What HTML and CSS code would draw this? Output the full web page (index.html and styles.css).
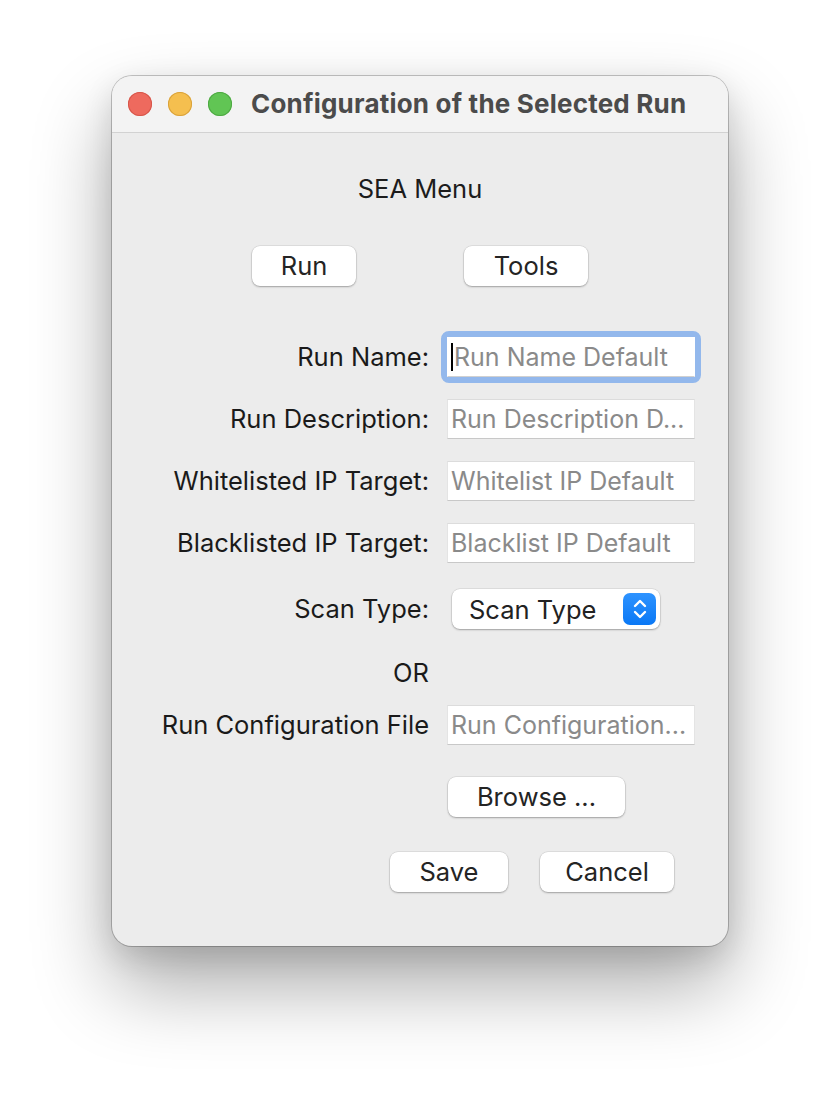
FILE: index.html
```html
<!DOCTYPE html>
<html lang="en">
<head>
<meta charset="utf-8">
<title>Configuration of the Selected Run</title>
<link rel="stylesheet" href="styles.css">
</head>
<body>
<div class="window">
  <header class="titlebar">
    <div class="lights">
      <span class="light red"></span>
      <span class="light yellow"></span>
      <span class="light green"></span>
    </div>
    <div class="title">Configuration of the Selected Run</div>
  </header>
  <main class="content">
    <div class="menu-title">SEA Menu</div>
    <div class="menu-buttons">
      <button class="btn btn-run">Run</button>
      <button class="btn btn-tools">Tools</button>
    </div>
    <div class="form">
      <label class="lbl">Run Name:</label>
      <div class="focus-ring"><div class="field"><span class="caret"></span><span class="ph">Run Name Default</span></div></div>

      <label class="lbl">Run Description:</label>
      <div class="field"><span class="ph">Run Description D...</span></div>

      <label class="lbl">Whitelisted IP Target:</label>
      <div class="field"><span class="ph">Whitelist IP Default</span></div>

      <label class="lbl">Blacklisted IP Target:</label>
      <div class="field"><span class="ph">Blacklist IP Default</span></div>

      <label class="lbl row-scan">Scan Type:</label>
      <div class="select row-scan">
        <span class="select-text">Scan Type</span>
        <span class="stepper">
          <svg width="18" height="24" viewBox="0 0 18 24"><path d="M4 9 L9 4 L14 9 M4 15 L9 20 L14 15" fill="none" stroke="#fff" stroke-width="2.4" stroke-linecap="round" stroke-linejoin="round"/></svg>
        </span>
      </div>

      <label class="lbl row-or">OR</label>
      <div class="row-or"></div>

      <label class="lbl row-config">Run Configuration File</label>
      <div class="field row-config"><span class="ph">Run Configuration...</span></div>

      <div class="row-browse"></div>
      <div class="row-browse"><button class="btn btn-browse">Browse ...</button></div>
    </div>
    <div class="actions">
      <button class="btn btn-save">Save</button>
      <button class="btn btn-cancel">Cancel</button>
    </div>
  </main>
</div>
</body>
</html>
```
FILE: styles.css
```css
* { box-sizing: border-box; }
html, body { margin: 0; padding: 0; background: #ffffff; }
body {
  width: 840px;
  height: 1094px;
  overflow: hidden;
  font-family: Inter, "Helvetica Neue", "Liberation Sans", sans-serif;
  padding-top: 76px;
  padding-left: 112px;
}
.window {
  width: 616px;
  height: 870px;
  border-radius: 20px;
  background: #ececec;
  box-shadow: 0 0 0 1px rgba(0,0,0,0.22), 0 40px 80px rgba(0,0,0,0.33), 0 10px 30px rgba(0,0,0,0.12);
  overflow: hidden;
  display: flex;
  flex-direction: column;
}
.titlebar {
  height: 57px;
  background: #f3f3f3;
  border-bottom: 1px solid #d2d2d2;
  display: flex;
  align-items: center;
  padding-left: 16px;
  flex-shrink: 0;
}
.lights { display: flex; gap: 16px; }
.light {
  width: 24px; height: 24px; border-radius: 50%;
  display: block;
}
.red { background: #ee6a5e; box-shadow: inset 0 0 0 1px #d6564a; }
.yellow { background: #f5bf4f; box-shadow: inset 0 0 0 1px #d9a23b; }
.green { background: #61c554; box-shadow: inset 0 0 0 1px #4ea843; }
.title {
  margin-left: 19px;
  font-size: 26px;
  font-weight: 700;
  color: #4b4b4b;
  letter-spacing: 0.2px;
  line-height: 30px;
}
.content {
  flex: 1;
  display: flex;
  flex-direction: column;
}
.menu-title {
  text-align: center;
  font-size: 25.5px;
  color: #1c1c1c;
  margin-top: 40px;
  height: 32px;
  line-height: 32px;
}
.menu-buttons {
  display: flex;
  justify-content: center;
  gap: 108px;
  margin-top: 41px;
}
.btn {
  font-family: inherit;
  font-size: 25.5px;
  color: #242424;
  background: #ffffff;
  border: none;
  border-radius: 8px;
  height: 40px;
  line-height: 40px;
  padding: 0;
  box-shadow: 0 0 0 0.5px rgba(0,0,0,0.12), 0 1px 2px rgba(0,0,0,0.28);
}
.btn-run { width: 104px; }
.btn-tools { width: 124px; }
.form {
  display: grid;
  grid-template-columns: 317px 248px;
  grid-auto-rows: 40px;
  column-gap: 18px;
  row-gap: 22px;
  margin-top: 51px;
}
.lbl {
  justify-self: end;
  align-self: start;
  height: 40px;
  line-height: 40px;
  font-size: 25.5px;
  color: #1a1a1a;
  white-space: nowrap;
}
.field {
  align-self: start;
  height: 40px;
  width: 248px;
  background: #ffffff;
  border-top: 1px solid #dcdcdc;
  border-left: 1px solid #e4e4e4;
  border-right: 1px solid #e4e4e4;
  border-bottom: 1px solid #c8c8c8;
  display: flex;
  align-items: center;
  padding-left: 3px;
  overflow: hidden;
}
.ph {
  font-size: 25px;
  color: #8a8a8a;
  white-space: nowrap;
}
.focus-ring {
  margin: -6px;
  width: 260px;
  height: 52px;
  border: 6px solid #93b8ec;
  border-radius: 8px;
}
.focus-ring .field { border-color: #ffffff; border-bottom-color: #d0d0d0; }
.caret {
  width: 2px;
  height: 28px;
  background: #000;
  margin-right: 1px;
}
.select {
  align-self: start;
  margin-left: 5px;
  width: 208px;
  height: 40px;
  background: #fff;
  border-radius: 8px;
  box-shadow: 0 0 0 0.5px rgba(0,0,0,0.12), 0 1px 2px rgba(0,0,0,0.28);
  display: flex;
  align-items: center;
  justify-content: space-between;
  padding: 0 4px 0 17px;
}
.select-text { font-size: 25.5px; color: #222; }
.stepper {
  width: 33px; height: 32px;
  border-radius: 7px;
  background: linear-gradient(#2e93ff, #0a78f5);
  display: flex; align-items: center; justify-content: center;
}
.row-scan { margin-top: 4px; }
.row-or { margin-top: 6px; }
.row-config { margin-top: -4px; }
.row-browse { margin-top: 6px; align-self: start; }
.btn-browse { width: 177px; margin-left: 1px; }
.actions {
  display: flex;
  gap: 32px;
  padding-left: 278px;
  margin-top: 41px;
}
.btn-save { width: 118px; }
.btn-cancel { width: 134px; }
```
